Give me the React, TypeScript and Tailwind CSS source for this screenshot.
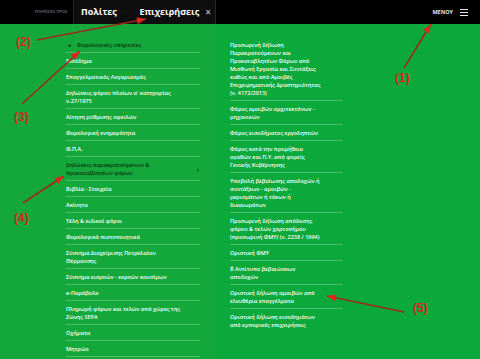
type Item = { lines: string[]; dark?: boolean; back?: boolean; next?: boolean };

const leftItems: Item[] = [
  { lines: ["Φορολογικές υπηρεσίες"], dark: true, back: true },
  { lines: ["Εισόδημα"] },
  { lines: ["Επαγγελματικός Λογαριασμός"] },
  { lines: ["Δηλώσεις φόρου πλοίων α' κατηγορίας", "ν.27/1975"] },
  { lines: ["Αίτηση ρύθμισης οφειλών"] },
  { lines: ["Φορολογική ενημερότητα"] },
  { lines: ["Φ.Π.Α."] },
  { lines: ["Δηλώσεις παρακρατούμενων &", "προκαταβλητέων φόρων"], dark: true, next: true },
  { lines: ["Βιβλία - Στοιχεία"] },
  { lines: ["Ακίνητα"] },
  { lines: ["Τέλη & ειδικοί φόροι"] },
  { lines: ["Φορολογικά πιστοποιητικά"] },
  { lines: ["Σύστημα Διαχείρισης Πετρελαίου", "Θέρμανσης"] },
  { lines: ["Σύστημα εισροών - εκροών καυσίμων"] },
  { lines: ["e-Παράβολο"] },
  { lines: ["Πληρωμή φόρων και τελών από χώρες της", "Ζώνης SEPA"] },
  { lines: ["Οχήματα"] },
  { lines: ["Μητρώο"] },
];

const rightItems: Item[] = [
  {
    lines: [
      "Προσωρινή δήλωση",
      "Παρακρατούμενων και",
      "Προκαταβλητέων Φόρων από",
      "Μισθωτή Εργασία και Συντάξεις",
      "καθώς και από Αμοιβές",
      "Επιχειρηματικής Δραστηριότητας",
      "(ν. 4172/2013)",
    ],
  },
  { lines: ["Φόρος αμοιβών αρχιτεκτόνων -", "μηχανικών"] },
  { lines: ["Φόρος εισοδήματος εργοληπτών"] },
  { lines: ["Φόρος κατά την προμήθεια", "αγαθών και Π.Υ. από φορείς", "Γενικής Κυβέρνησης"] },
  { lines: ["Υποβολή βεβαίωσης αποδοχών ή", "συντάξεων - αμοιβών -", "μερισμάτων ή τόκων ή", "δικαιωμάτων"] },
  { lines: ["Προσωρινή δήλωση απόδοσης", "φόρου & τελών χαρτοσήμου", "(προσωρινή ΦΜΥ) (ν. 2238 / 1994)"] },
  { lines: ["Οριστική ΦΜΥ"] },
  { lines: ["Β΄ Αντίτυπο βεβαιώσεων", "αποδοχών"] },
  { lines: ["Οριστική δήλωση αμοιβών από", "ελευθέρια επαγγέλματα"] },
  { lines: ["Οριστική δήλωση εισοδημάτων", "από εμπορικές επιχειρήσεις"] },
];

// annotation arrows: [x1, y1, x2, y2] with the head at x2,y2
const arrows = [
  [37, 40, 146, 19],
  [22, 104, 80, 51],
  [23, 203, 64, 176],
  [404, 68, 431, 24],
  [404, 312, 327, 296],
];

const labels = [
  { text: "(2)", x: 16, y: 36 },
  { text: "(3)", x: 14, y: 111 },
  { text: "(4)", x: 14, y: 212 },
  { text: "(1)", x: 395, y: 72 },
  { text: "(5)", x: 413, y: 302 },
];

function head(a: number[]) {
  const [x1, y1, x2, y2] = a;
  const len = Math.hypot(x2 - x1, y2 - y1);
  const ux = (x2 - x1) / len;
  const uy = (y2 - y1) / len;
  const bx = x2 - ux * 9;
  const by = y2 - uy * 9;
  return `${x2},${y2} ${bx - uy * 3.5},${by + ux * 3.5} ${bx + uy * 3.5},${by - ux * 3.5}`;
}

function Row({ item, last }: { item: Item; last?: boolean }) {
  return (
    <li
      className={
        "flex items-center pt-[4px] pb-[3px] leading-[8px] " +
        (last ? "border-b border-transparent " : "border-b border-white/25 ") +
        (item.dark ? "text-[#0b2e14]" : "text-white")
      }
    >
      {item.back && <span className="mr-[6px] ml-[2px] text-[5px]">◂</span>}
      <span className="flex-1">
        {item.lines.map((l, i) => (
          <span key={i} className="block whitespace-nowrap">
            {l}
          </span>
        ))}
      </span>
      {item.next && <span className="mr-[1px] text-[7px] leading-none">›</span>}
    </li>
  );
}

export default function App() {
  return (
    <div className="relative w-[480px] h-[359px] overflow-hidden bg-[#0ba83c] font-['Open_Sans',sans-serif]">
      <header className="flex h-6 bg-black">
        <div className="flex w-[216px]">
          <div className="w-[73px] flex items-center justify-end pr-[5px] text-[4px] text-gray-400">
            ΥΠΗΡΕΣΙΕΣ ΠΡΟΣ:
          </div>
          <div className="flex flex-1 items-center bg-[#0e0e0e] border-l border-r border-[#262626]">
            <span className="pl-[7px] text-[9px] font-bold text-white">Πολίτες</span>
            <span className="ml-[9px] text-[6px] text-gray-600">·</span>
            <span className="ml-[12px] text-[9px] font-bold text-white">Επιχειρήσεις</span>
            <span className="ml-[6px] text-[10px] leading-none text-gray-300">×</span>
          </div>
        </div>
        <div className="flex flex-1 items-center justify-end pr-[12px] gap-[7px]">
          <span className="text-[5.5px] font-bold text-gray-200">ΜΕΝΟΥ</span>
          <span className="flex flex-col gap-[2px]">
            <span className="block w-[8px] h-px bg-gray-200" />
            <span className="block w-[8px] h-px bg-gray-200" />
            <span className="block w-[8px] h-px bg-gray-200" />
          </span>
        </div>
      </header>

      <div className="flex">
        <div className="w-[216px] bg-[#14a83b] pl-[66px] pr-[16px] pt-[13px] pb-4">
          <ul className="text-[5.5px] font-semibold">
            {leftItems.map((it, i) => (
              <Row key={i} item={it} />
            ))}
          </ul>
        </div>
        <div className="flex-1 pt-[13px] pl-[14px]">
          <ul className="w-[112px] text-[5.5px] font-semibold">
            {rightItems.map((it, i) => (
              <Row key={i} item={it} last={i === rightItems.length - 1} />
            ))}
          </ul>
        </div>
      </div>

      <svg className="absolute inset-0 pointer-events-none" width="480" height="359">
        {arrows.map((a, i) => (
          <g key={i}>
            <line x1={a[0]} y1={a[1]} x2={a[2]} y2={a[3]} stroke="#9c2a1c" strokeWidth="1.6" />
            <polygon points={head(a)} fill="#e3241a" />
          </g>
        ))}
      </svg>
      {labels.map((l) => (
        <span
          key={l.text}
          className="absolute text-[12px] font-bold leading-none text-[#d9261b] font-['Liberation_Sans',sans-serif]"
          style={{ left: l.x, top: l.y }}
        >
          {l.text}
        </span>
      ))}
    </div>
  );
}
